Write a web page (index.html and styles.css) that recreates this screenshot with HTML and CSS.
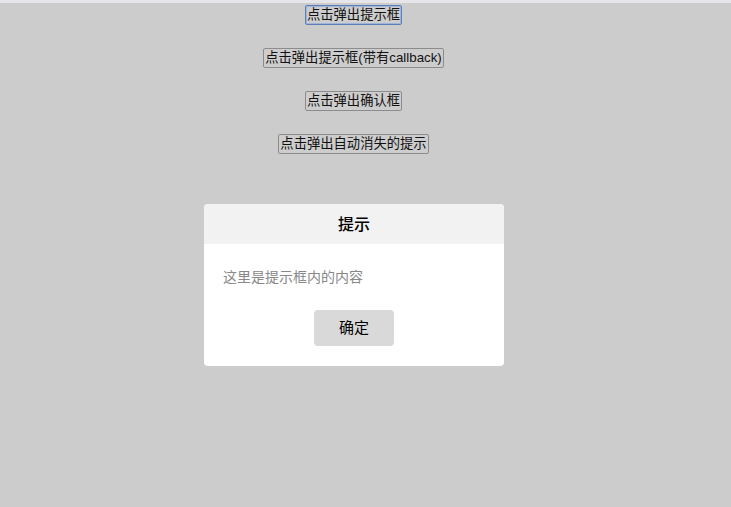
FILE: index.html
```html
<!DOCTYPE html>
<html lang="zh-CN">
<head>
<meta charset="utf-8">
<title>弹框示例</title>
<link rel="stylesheet" href="styles.css">
</head>
<body>
<div class="topband"></div>
<div class="actions">
  <button class="btn btn-focus">点击弹出提示框</button>
  <button class="btn">点击弹出提示框(带有callback)</button>
  <button class="btn">点击弹出确认框</button>
  <button class="btn">点击弹出自动消失的提示</button>
</div>
<div class="dialog">
  <div class="dialog-header">提示</div>
  <div class="dialog-body">这里是提示框内的内容</div>
  <div class="dialog-footer"><button class="ok">确定</button></div>
</div>
</body>
</html>
```
FILE: styles.css
```css
html, body {
  margin: 0;
  padding: 0;
  height: 100%;
}
body {
  background: #cccccc;
  font-family: "Noto Sans CJK SC", "Noto Sans", sans-serif;
  position: relative;
  overflow: hidden;
}
.topband {
  height: 3px;
  background: #e6e6ea;
}
.actions {
  display: flex;
  flex-direction: column;
  align-items: center;
  gap: 23px;
  padding: 2px 24px 0 0;
}
.btn {
  font-family: "Liberation Sans", "Noto Sans CJK SC", sans-serif;
  font-size: 13.3px;
  line-height: 16px;
  height: 20px;
  padding: 0 1px;
  background: #cdcdcd;
  border: 1px solid #8c8c8c;
  border-radius: 2px;
  color: #111;
  margin: 0;
}
.btn-focus {
  border-color: #5b7fb8;
  box-shadow: inset 0 0 0 1px #9fb4d6;
}
.dialog {
  position: absolute;
  left: 204px;
  top: 204px;
  width: 300px;
  background: #ffffff;
  border-radius: 4px;
  overflow: hidden;
}
.dialog-header {
  height: 40px;
  line-height: 38px;
  background: #f2f2f2;
  text-align: center;
  font-size: 16px;
  font-weight: 500;
  color: #000;
}
.dialog-body {
  padding: 22px 20px 0 19px;
  line-height: 20px;
  font-size: 14px;
  color: #888888;
}
.dialog-footer {
  display: flex;
  justify-content: center;
  padding: 24px 0 20px;
}
.ok {
  width: 80px;
  height: 36px;
  border: none;
  border-radius: 4px;
  background: #d9d9d9;
  font-family: "Noto Sans CJK SC", "Noto Sans", sans-serif;
  font-size: 15px;
  line-height: 20px;
  color: #000;
  padding: 0 0 2px;
}
```
